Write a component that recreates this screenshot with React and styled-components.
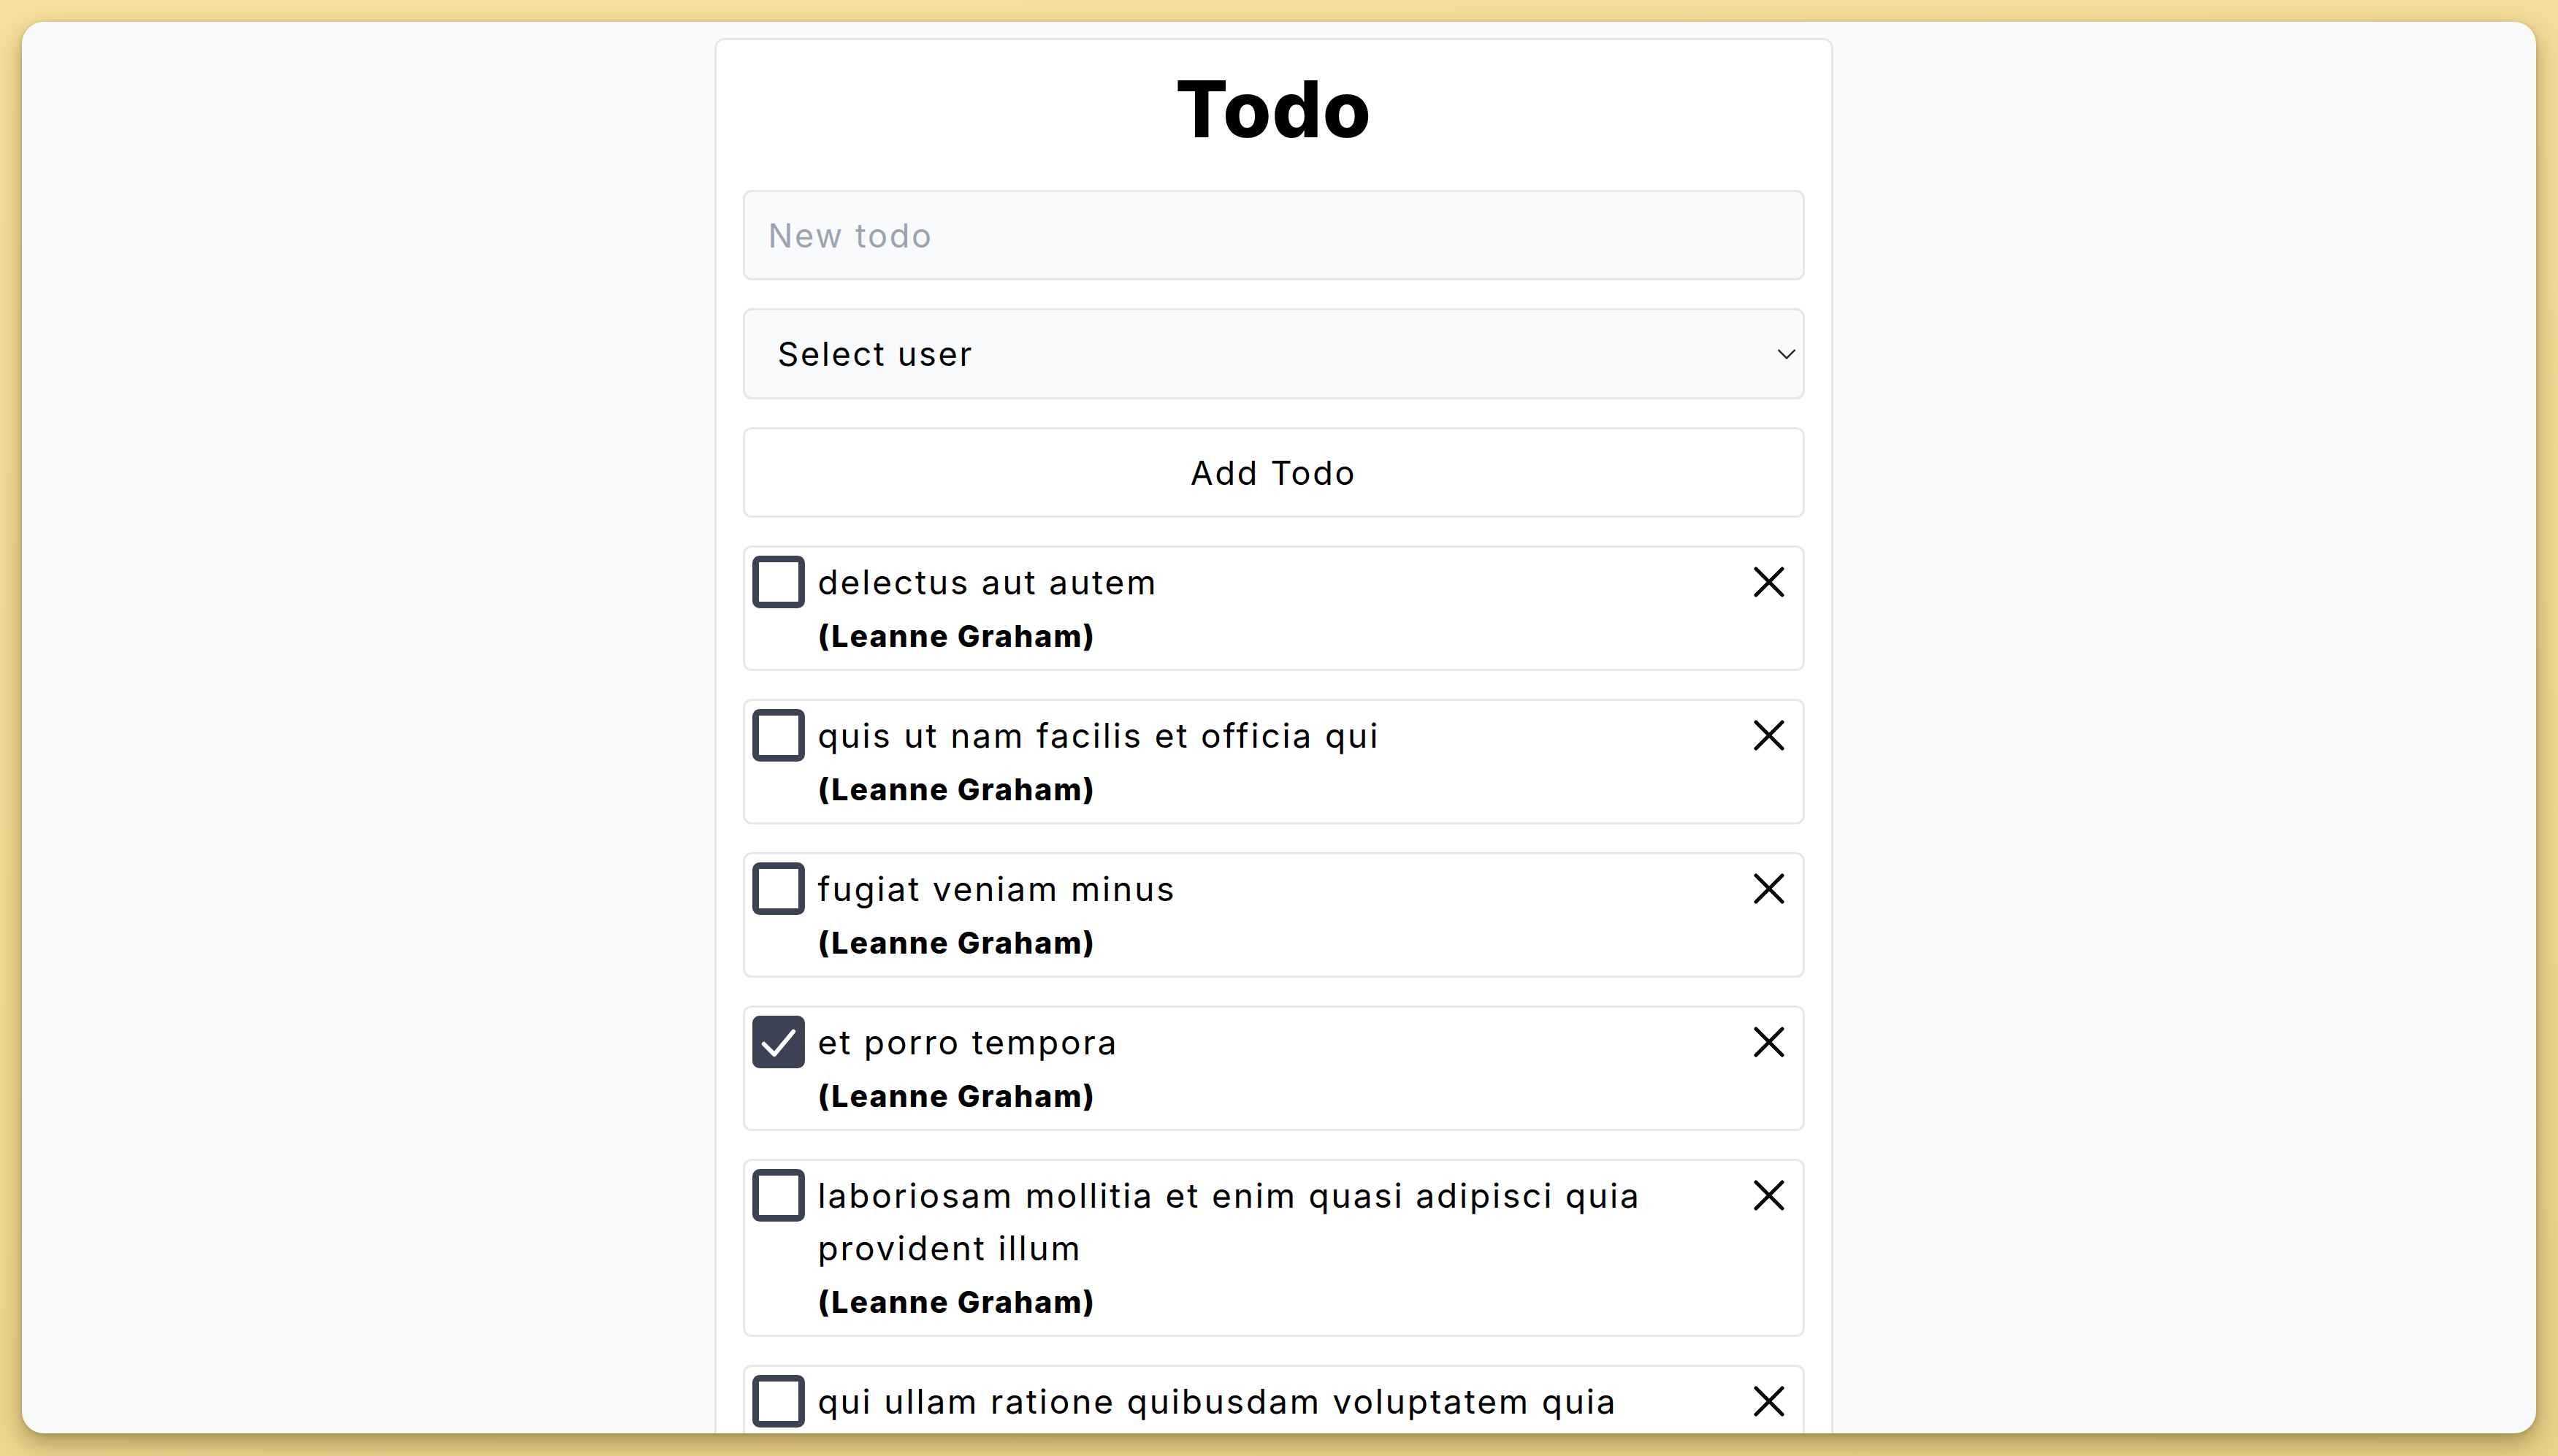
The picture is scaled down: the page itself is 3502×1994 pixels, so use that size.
import React, { useState } from 'react';
import styled, { createGlobalStyle } from 'styled-components';

const GlobalStyle = createGlobalStyle`
  html, body {
    margin: 0;
    padding: 0;
    height: 1994px;
    overflow: hidden;
  }
  body {
    background: linear-gradient(170deg, #f7e09b 0%, #f0d993 60%, #e9d28b 100%);
    font-family: 'Inter', 'Liberation Sans', sans-serif;
    color: #000;
  }
  * {
    box-sizing: border-box;
  }
`

const Window = styled.div`
  margin: 30px;
  height: 1933px;
  border-radius: 30px;
  overflow: hidden;
  background-color: #fafafa;
  box-shadow: 0 14px 34px rgba(90, 70, 10, 0.45), 0 2px 6px rgba(90, 70, 10, 0.25);
`

const Viewport = styled.div`
  display: flex;
  justify-content: center;
  padding: 22px 15px 0 0;
`

const Card = styled.div`
  width: 1532px;
  background-color: #fff;
  border: 3px solid #e7e7ea;
  border-radius: 14px;
  padding: 30px 36px 40px;
  display: flex;
  flex-direction: column;
  gap: 38px;
`

const Title = styled.h1`
  margin: 0 0 9px;
  font-size: 107px;
  line-height: 128px;
  font-weight: 800;
  text-align: center;
  letter-spacing: 1px;
`

const TextInput = styled.input`
  height: 124px;
  width: 100%;
  border: 3px solid #e5e7eb;
  border-radius: 12px;
  background-color: #f9fafb;
  padding: 0 32px;
  font-family: inherit;
  font-size: 45px;
  letter-spacing: 0.06em;
  color: #000;
  outline: none;

  &::placeholder {
    color: #9ca3af;
  }
`

const SelectWrap = styled.div`
  position: relative;
`

const Select = styled.select`
  appearance: none;
  height: 125px;
  width: 100%;
  border: 3px solid #e5e7eb;
  border-radius: 12px;
  background-color: #f9fafb;
  padding: 0 60px 0 45px;
  font-family: inherit;
  font-size: 45px;
  letter-spacing: 0.06em;
  color: #000;
  outline: none;
`

const Chevron = styled.svg`
  position: absolute;
  right: 12px;
  top: 50%;
  transform: translateY(-50%);
  pointer-events: none;
`

const AddButton = styled.button`
  height: 124px;
  width: 100%;
  border: 3px solid #e5e7eb;
  border-radius: 12px;
  background-color: #fff;
  font-family: inherit;
  font-size: 45px;
  letter-spacing: 0.06em;
  color: #000;
  cursor: pointer;
`

const Item = styled.div`
  display: flex;
  align-items: flex-start;
  gap: 18px;
  border: 3px solid #e5e7eb;
  border-radius: 12px;
  padding: 11px 10px;
`

const Box = styled.div`
  flex: none;
  width: 72px;
  height: 72px;
  border: 9px solid #3d4154;
  border-radius: 10px;
  background-color: ${props => props.checked ? '#3d4154' : '#fff'};
  display: flex;
  align-items: center;
  justify-content: center;
  cursor: pointer;
`

const Content = styled.div`
  flex: 1;
  padding-right: 56px;
  font-size: 46px;
  line-height: 72px;
  letter-spacing: 0.062em;
`

const UserName = styled.div`
  padding-top: 4px;
  font-size: 41px;
  line-height: 68px;
  font-weight: 800;
  letter-spacing: 0.05em;
`

const CloseButton = styled.button`
  flex: none;
  width: 72px;
  height: 72px;
  border: none;
  background: none;
  padding: 0;
  display: flex;
  align-items: center;
  justify-content: center;
  cursor: pointer;
`

const initialTodos = [
    { id: 1, title: 'delectus aut autem', completed: false },
    { id: 2, title: 'quis ut nam facilis et officia qui', completed: false },
    { id: 3, title: 'fugiat veniam minus', completed: false },
    { id: 4, title: 'et porro tempora', completed: true },
    { id: 5, title: 'laboriosam mollitia et enim quasi adipisci quia provident illum', completed: false },
    { id: 6, title: 'qui ullam ratione quibusdam voluptatem quia omnis', completed: false },
    { id: 7, title: 'illo expedita consequatur quia in', completed: false },
];

function Checkbox(props) {
    return (
        <Box checked={props.checked} onClick={props.onClick}>
            {props.checked
                ? <svg width="54" height="54" viewBox="0 0 24 24" fill="none" stroke="#fff" strokeWidth="2.6" strokeLinecap="round" strokeLinejoin="round">
                    <path d="M3 13.2 9.4 19.6 21 5.6" />
                  </svg>
                : null
            }
        </Box>
    );
}

function TodoItem(props) {
    return (
        <Item>
            <Checkbox checked={props.todo.completed} onClick={props.onToggle} />
            <Content>
                <div>{props.todo.title}</div>
                <UserName>(Leanne Graham)</UserName>
            </Content>
            <CloseButton onClick={props.onRemove} aria-label="Remove">
                <svg width="42" height="42" viewBox="0 0 42 42" fill="none" stroke="#000" strokeWidth="5" strokeLinecap="round">
                    <path d="M3 3 39 39M39 3 3 39" />
                </svg>
            </CloseButton>
        </Item>
    );
}

function App() {

    const [todos, setTodos] = useState(initialTodos);
    const [text, setText] = useState('');

    const toggle = (id) => {
        setTodos(todos.map(t => t.id === id ? { ...t, completed: !t.completed } : t));
    }

    const remove = (id) => {
        setTodos(todos.filter(t => t.id !== id));
    }

    return (
        <>
            <GlobalStyle />
            <Window>
                <Viewport>
                    <Card>
                        <Title>Todo</Title>
                        <TextInput placeholder="New todo" value={text} onChange={(e) => setText(e.target.value)} />
                        <SelectWrap>
                            <Select defaultValue="">
                                <option value="">Select user</option>
                                <option value="1">Leanne Graham</option>
                                <option value="2">Ervin Howell</option>
                            </Select>
                            <Chevron width="26" height="16" viewBox="0 0 26 16" fill="none" stroke="#222" strokeWidth="2.4">
                                <path d="M1.5 2 13 13.5 24.5 2" />
                            </Chevron>
                        </SelectWrap>
                        <AddButton>Add Todo</AddButton>
                        {todos.map(todo => (
                            <TodoItem
                                key={todo.id}
                                todo={todo}
                                onToggle={() => toggle(todo.id)}
                                onRemove={() => remove(todo.id)}
                            />
                        ))}
                    </Card>
                </Viewport>
            </Window>
        </>
    );
}

export default App;
